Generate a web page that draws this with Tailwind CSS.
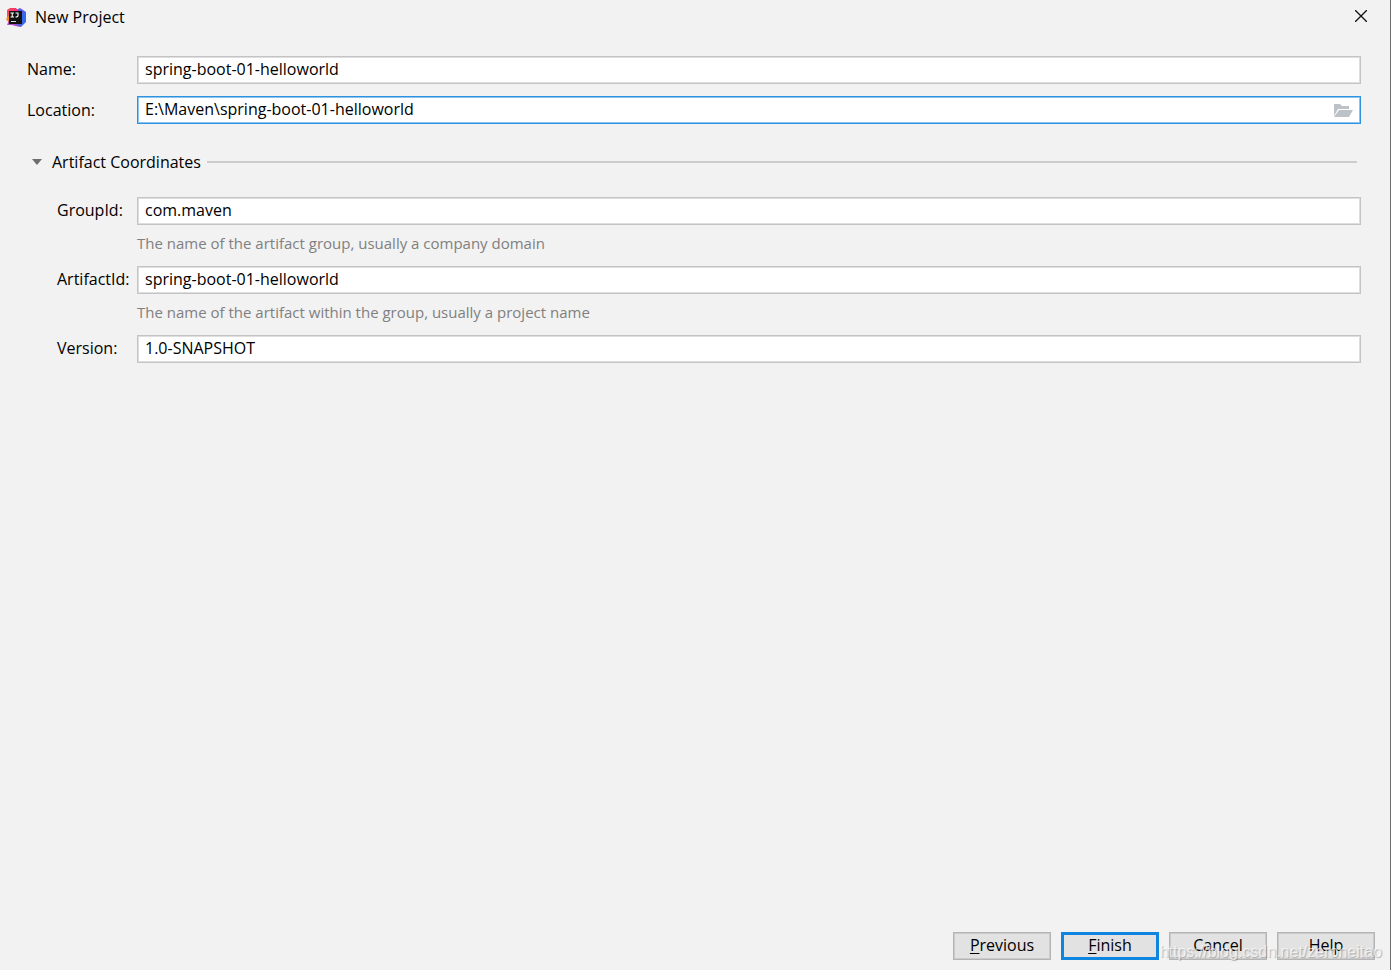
<!DOCTYPE html>
<html lang="en">
<head>
<meta charset="utf-8">
<title>New Project</title>
<script src="https://cdn.jsdelivr.net/npm/@tailwindcss/browser@4"></script>
</head>
<body class="bg-[#f2f2f2] text-black">
<div class="relative flex min-h-screen flex-col border-r border-[#6e6e6e] font-['Open_Sans','Noto_Sans',sans-serif] text-base leading-5">
  <header class="flex h-[34px] items-center pl-1.5 pr-[23px]">
    <svg class="mr-[9px] size-5 shrink-0" viewBox="0 0 20 20" aria-hidden="true">
      <defs>
        <linearGradient id="blue" x1="0" y1="0" x2="0" y2="1">
          <stop offset="0" stop-color="#6b57d8"/><stop offset=".5" stop-color="#2b6cf0"/><stop offset="1" stop-color="#4a63e0"/>
        </linearGradient>
        <linearGradient id="pink" x1="0" y1="0" x2="1" y2="0">
          <stop offset="0" stop-color="#fb4a5e"/><stop offset="1" stop-color="#f52c74"/>
        </linearGradient>
      </defs>
      <path d="M10 3l4-2 6 4v10l-5 5-7-2z" fill="url(#blue)"/>
      <path d="M1 3l3-2 6 0 3 4-9 8-3-3z" fill="url(#pink)"/>
      <path d="M0 12l3-4 3 4-3 4z" fill="#f98a1c"/>
      <path d="M1 18l2-5 5 3 7 4-6-1-3-1z" fill="#b04fc8"/>
      <path d="M3 4h13v13H3z" fill="#111"/>
      <path d="M4.500 6h3.500M6.250 6v4M4.500 10h3.500M9.500 6h3M12 6v2.500q0 1.500-2.500 1.500" fill="none" stroke="#fff" stroke-width="1.100"/>
      <path d="M5 14h5v1H5z" fill="#ddd"/>
    </svg>
    <h1 class="grow">New Project</h1>
    <button type="button" aria-label="Close" class="mb-0.5">
      <svg class="size-3" viewBox="0 0 12 12" fill="none" stroke="#111" stroke-width="1.300"><path d="M0 0l12 12M12 0L0 12"/></svg>
    </button>
  </header>

  <form class="flex grow flex-col">
    <div class="flex flex-col gap-3 pt-[22px] pl-[27px] pr-[29px]">
      <div class="flex h-7 items-center">
        <label for="name" class="w-[110px] shrink-0 pb-0.5">Name:</label>
        <input id="name" value="spring-boot-01-helloworld" class="h-7 min-w-0 grow border border-[#c4c4c4] bg-white px-[7px] pb-0.5 inset-ring inset-ring-[#dedede] outline-none">
      </div>
      <div class="flex h-7 items-center">
        <label for="location" class="w-[110px] shrink-0">Location:</label>
        <div class="flex h-7 min-w-0 grow items-center border border-[#2f92de] bg-white pr-[7px] inset-ring inset-ring-[#8ac4f0]">
          <input id="location" value="E:\Maven\spring-boot-01-helloworld" class="min-w-0 grow px-[7px] pb-0.5 outline-none">
          <button type="button" aria-label="Browse">
            <svg class="h-4 w-5" viewBox="0 0 20 16" fill="#bcc2c7"><path d="M1 2h6l2 2h7v3H5l-4 7z"/><path d="M6 8h14l-4 7H1z"/></svg>
          </button>
        </div>
      </div>
    </div>

    <section class="pr-[29px]">
      <h2 class="flex items-center pt-7 pl-8 pr-1">
        <button type="button" class="flex items-center gap-2.5">
          <svg class="h-1.5 w-2.5" viewBox="0 0 10 6" fill="#6e6e6e"><path d="M0 0h10L5 6z"/></svg>
          Artifact Coordinates
        </button>
        <span class="ml-1.5 h-0.5 grow bg-[#cdcdcd]"></span>
      </h2>
      <div class="grid grid-cols-[80px_1fr] items-center pt-[25px] pl-[57px]">
        <label for="group" class="pb-0.5">GroupId:</label>
        <input id="group" value="com.maven" class="h-7 min-w-0 border border-[#c4c4c4] bg-white px-[7px] pb-0.5 inset-ring inset-ring-[#dedede] outline-none">
        <p class="col-start-2 flex h-[41px] items-center pb-1.5 text-[15px] text-[#808080]">The name of the artifact group, usually a company domain</p>
        <label for="artifact" class="pb-0.5">ArtifactId:</label>
        <input id="artifact" value="spring-boot-01-helloworld" class="h-7 min-w-0 border border-[#c4c4c4] bg-white px-[7px] pb-0.5 inset-ring inset-ring-[#dedede] outline-none">
        <p class="col-start-2 flex h-[41px] items-center pb-1.5 text-[15px] text-[#808080]">The name of the artifact within the group, usually a project name</p>
        <label for="version" class="pb-0.5">Version:</label>
        <input id="version" value="1.0-SNAPSHOT" class="h-7 min-w-0 border border-[#c4c4c4] bg-white px-[7px] pb-0.5 inset-ring inset-ring-[#dedede] outline-none">
      </div>
    </section>

    <footer class="mt-auto flex justify-end gap-2.5 pb-2.5 pr-[15px]">
      <button type="button" class="h-7 w-[98px] border border-[#b4b4b4] bg-[#e2e2e2] pb-0.5 inset-ring inset-ring-[#cbcbcb]"><span class="underline underline-offset-2">P</span>revious</button>
      <button type="button" class="h-7 w-[98px] border-3 border-[#0f85df] bg-[#e2e2e2] pb-0.5"><span class="underline underline-offset-2">F</span>inish</button>
      <button type="button" class="h-7 w-[98px] border border-[#b4b4b4] bg-[#e2e2e2] pb-0.5 inset-ring inset-ring-[#cbcbcb]">Cancel</button>
      <button type="button" class="h-7 w-[98px] border border-[#b4b4b4] bg-[#e2e2e2] pb-0.5 inset-ring inset-ring-[#cbcbcb]">Help</button>
    </footer>
  </form>
  <p class="pointer-events-none absolute right-2 bottom-2 font-['Liberation_Sans',sans-serif] text-base leading-5 text-white/65 text-shadow-[1px_1px_1px_rgb(0_0_0/0.25)]">https://blog.csdn.net/zeroheitao</p>
</div>
</body>
</html>
